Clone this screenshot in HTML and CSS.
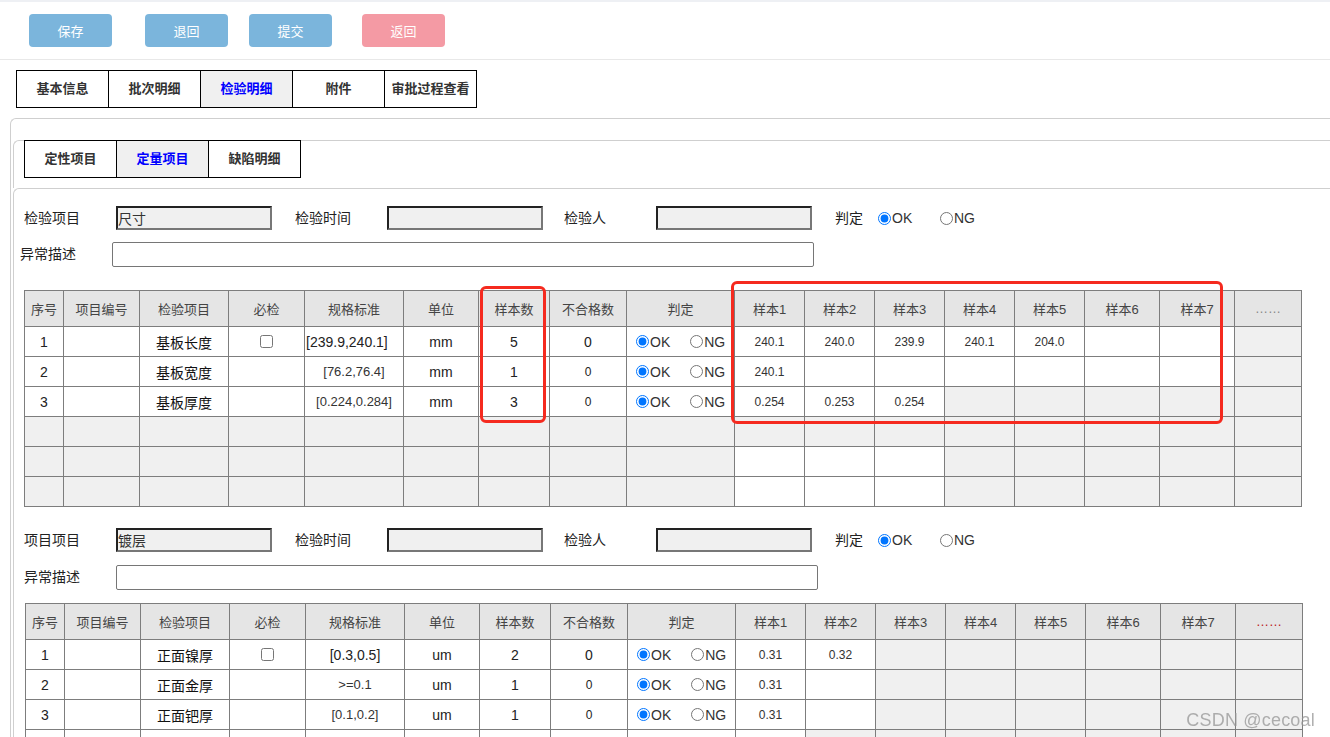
FILE: index.html
```html
<!DOCTYPE html>
<html lang="zh-CN">
<head>
<meta charset="utf-8">
<title>检验明细</title>
<link rel="stylesheet" href="styles.css">
</head>
<body>
<div class="topbar">
  <button class="btn btn-blue">保存</button>
  <button class="btn btn-blue gap-a">退回</button>
  <button class="btn btn-blue gap-b">提交</button>
  <button class="btn btn-pink gap-c">返回</button>
</div>

<div class="tabs main-tabs">
  <div class="tab">基本信息</div>
  <div class="tab">批次明细</div>
  <div class="tab active">检验明细</div>
  <div class="tab">附件</div>
  <div class="tab">审批过程查看</div>
</div>

<div class="outer">
  <div class="panel panel-tabs">
    <div class="tabs sub-tabs">
      <div class="tab">定性项目</div>
      <div class="tab active">定量项目</div>
      <div class="tab">缺陷明细</div>
    </div>
  </div>

  <div class="panel panel-body">
    <div class="form form-first">
      <div class="frow">
        <span class="flabel">检验项目</span>
        <input class="finput" type="text" value="尺寸" readonly>
        <span class="flabel gap-23">检验时间</span>
        <input class="finput" type="text" value="" readonly>
        <span class="flabel gap-21">检验人</span>
        <input class="finput" type="text" value="" readonly>
        <span class="flabel flabel-short gap-23">判定</span>
        <label class="fradio"><input type="radio" name="f1" checked>OK</label>
        <label class="fradio"><input type="radio" name="f1">NG</label>
      </div>
      <div class="frow frow-desc">
        <span class="flabel shift">异常描述</span>
        <input class="fdesc" type="text" value="">
      </div>
    </div>

    <div class="tbl-wrap">
      <table class="t">
        <colgroup>
          <col class="c-no"><col class="c-code"><col class="c-item"><col class="c-must"><col class="c-spec"><col class="c-unit"><col class="c-cnt"><col class="c-bad"><col class="c-judge">
          <col class="c-s"><col class="c-s"><col class="c-s"><col class="c-s"><col class="c-s"><col class="c-s2"><col class="c-s2"><col class="c-more">
        </colgroup>
        <tr class="hd">
          <th>序号</th><th>项目编号</th><th>检验项目</th><th>必检</th><th>规格标准</th><th>单位</th><th>样本数</th><th>不合格数</th><th>判定</th>
          <th>样本1</th><th>样本2</th><th>样本3</th><th>样本4</th><th>样本5</th><th>样本6</th><th>样本7</th><th class="more">……</th>
        </tr>
        <tr>
          <td>1</td><td></td><td class="name">基板长度</td><td><input class="chk" type="checkbox"></td><td class="spec big left">[239.9,240.1]</td><td>mm</td><td>5</td><td>0</td>
          <td><div class="jr"><label><input type="radio" name="a1" checked>OK</label><label><input type="radio" name="a1">NG</label></div></td>
          <td class="s">240.1</td><td class="s">240.0</td><td class="s">239.9</td><td class="s">240.1</td><td class="s">204.0</td><td class="s"></td><td class="s"></td><td class="g"></td>
        </tr>
        <tr>
          <td>2</td><td></td><td class="name">基板宽度</td><td></td><td class="spec">[76.2,76.4]</td><td>mm</td><td>1</td><td class="sm">0</td>
          <td><div class="jr"><label><input type="radio" name="a2" checked>OK</label><label><input type="radio" name="a2">NG</label></div></td>
          <td class="s">240.1</td><td class="s"></td><td class="s"></td><td class="s"></td><td class="s"></td><td class="s"></td><td class="s"></td><td class="g"></td>
        </tr>
        <tr>
          <td>3</td><td></td><td class="name">基板厚度</td><td></td><td class="spec">[0.224,0.284]</td><td>mm</td><td>3</td><td class="sm">0</td>
          <td><div class="jr"><label><input type="radio" name="a3" checked>OK</label><label><input type="radio" name="a3">NG</label></div></td>
          <td class="s">0.254</td><td class="s">0.253</td><td class="s">0.254</td><td class="g"></td><td class="g"></td><td class="g"></td><td class="g"></td><td class="g"></td>
        </tr>
        <tr class="empty">
          <td></td><td></td><td></td><td></td><td></td><td></td><td></td><td></td><td></td><td></td><td></td><td></td><td></td><td></td><td></td><td></td><td></td>
        </tr>
        <tr class="empty">
          <td></td><td></td><td></td><td></td><td></td><td></td><td></td><td></td><td></td><td class="w"></td><td class="w"></td><td class="w"></td><td></td><td></td><td></td><td></td><td></td>
        </tr>
        <tr class="empty">
          <td></td><td></td><td></td><td></td><td></td><td></td><td></td><td></td><td></td><td class="w"></td><td class="w"></td><td class="w"></td><td></td><td></td><td></td><td></td><td></td>
        </tr>
      </table>
      <div class="mark mark-count"></div>
      <div class="mark mark-samples"></div>
    </div>

    <div class="form form-second">
      <div class="frow">
        <span class="flabel">项目项目</span>
        <input class="finput" type="text" value="镀层" readonly>
        <span class="flabel gap-23">检验时间</span>
        <input class="finput" type="text" value="" readonly>
        <span class="flabel gap-21">检验人</span>
        <input class="finput" type="text" value="" readonly>
        <span class="flabel flabel-short gap-23">判定</span>
        <label class="fradio"><input type="radio" name="f2" checked>OK</label>
        <label class="fradio"><input type="radio" name="f2">NG</label>
      </div>
      <div class="frow frow-desc">
        <span class="flabel">异常描述</span>
        <input class="fdesc" type="text" value="">
      </div>
    </div>

    <div class="tbl-wrap tbl-second">
      <table class="t">
        <colgroup>
          <col class="c-no"><col class="c-code"><col class="c-item"><col class="c-must"><col class="c-spec"><col class="c-unit"><col class="c-cnt"><col class="c-bad"><col class="c-judge">
          <col class="c-s"><col class="c-s"><col class="c-s"><col class="c-s"><col class="c-s"><col class="c-s2"><col class="c-s2"><col class="c-more">
        </colgroup>
        <tr class="hd">
          <th>序号</th><th>项目编号</th><th>检验项目</th><th>必检</th><th>规格标准</th><th>单位</th><th>样本数</th><th>不合格数</th><th>判定</th>
          <th>样本1</th><th>样本2</th><th>样本3</th><th>样本4</th><th>样本5</th><th>样本6</th><th>样本7</th><th class="more red">……</th>
        </tr>
        <tr>
          <td>1</td><td></td><td class="name">正面镍厚</td><td><input class="chk" type="checkbox"></td><td class="spec big">[0.3,0.5]</td><td>um</td><td>2</td><td>0</td>
          <td><div class="jr"><label><input type="radio" name="b1" checked>OK</label><label><input type="radio" name="b1">NG</label></div></td>
          <td class="s">0.31</td><td class="s">0.32</td><td class="g"></td><td class="g"></td><td class="g"></td><td class="g"></td><td class="g"></td><td class="g"></td>
        </tr>
        <tr>
          <td>2</td><td></td><td class="name">正面金厚</td><td></td><td class="spec">&gt;=0.1</td><td>um</td><td>1</td><td class="sm">0</td>
          <td><div class="jr"><label><input type="radio" name="b2" checked>OK</label><label><input type="radio" name="b2">NG</label></div></td>
          <td class="s">0.31</td><td class="s"></td><td class="g"></td><td class="g"></td><td class="g"></td><td class="g"></td><td class="g"></td><td class="g"></td>
        </tr>
        <tr>
          <td>3</td><td></td><td class="name">正面钯厚</td><td></td><td class="spec">[0.1,0.2]</td><td>um</td><td>1</td><td class="sm">0</td>
          <td><div class="jr"><label><input type="radio" name="b3" checked>OK</label><label><input type="radio" name="b3">NG</label></div></td>
          <td class="s">0.31</td><td class="s"></td><td class="g"></td><td class="g"></td><td class="g"></td><td class="g"></td><td class="g"></td><td class="g"></td>
        </tr>
        <tr>
          <td></td><td></td><td></td><td></td><td></td><td></td><td></td><td></td><td></td><td></td><td class="g"></td><td class="g"></td><td class="g"></td><td class="g"></td><td class="g"></td><td class="g"></td><td class="g"></td>
        </tr>
        <tr>
          <td></td><td></td><td></td><td></td><td></td><td></td><td></td><td></td><td></td><td></td><td class="g"></td><td class="g"></td><td class="g"></td><td class="g"></td><td class="g"></td><td class="g"></td><td class="g"></td>
        </tr>
      </table>
    </div>
  </div>
</div>

<div class="watermark">CSDN @cecoal</div>
</body>
</html>
```

FILE: styles.css
```css
html, body {
  margin: 0;
  padding: 0;
  overflow: hidden;
}
body {
  font-family: "Liberation Sans", "Noto Sans CJK SC", sans-serif;
  color: #333;
  background: #fff;
  height: 737px;
}

/* top toolbar */
.topbar {
  box-sizing: border-box;
  height: 60px;
  border-top: 2px solid #eef0f4;
  border-bottom: 1px solid #e8e8e8;
  padding: 12px 0 0 29px;
  display: flex;
  align-items: flex-start;
}
.btn {
  width: 83px;
  height: 33px;
  border: none;
  border-radius: 4px;
  color: #fff;
  font-family: "Liberation Sans", "Noto Sans CJK SC", sans-serif;
  font-size: 13px;
  padding: 0;
}
.btn-blue { background: #7bb5dc; }
.btn-pink { background: #f49aa4; }
.gap-a { margin-left: 33px; }
.gap-b { margin-left: 21px; }
.gap-c { margin-left: 30px; }

/* tabs */
.tabs {
  display: flex;
}
.tab {
  box-sizing: border-box;
  width: 93px;
  height: 38px;
  border: 1px solid #000;
  background: #fff;
  display: flex;
  align-items: center;
  justify-content: center;
  padding-bottom: 3px;
  font-size: 13px;
  font-weight: bold;
  color: #333;
}
.tab + .tab { margin-left: -1px; }
.tab.active {
  background: #f0f0f0;
  color: #0000ff;
}
.main-tabs {
  margin: 10px 0 0 16px;
}

/* panels */
.outer {
  margin: 10px 0 0 10px;
  border-top: 1px solid #cfcfcf;
  border-left: 1px solid #cfcfcf;
  border-top-left-radius: 6px;
  padding: 21px 0 0 2px;
}
.panel {
  border-top: 1px solid #cfcfcf;
  border-left: 1px solid #cfcfcf;
  border-top-left-radius: 6px;
}
.panel-tabs {
  padding: 0 0 10px 10px;
}
.sub-tabs {
  margin-top: -1px;
}
.panel-body {
  padding: 0 0 0 10px;
}

/* forms */
.frow {
  display: flex;
  align-items: center;
  height: 26px;
}
.form-first { padding-top: 16px; }
.form-second { padding-top: 20px; }
.frow-desc {
  margin-top: 11px;
  height: 25px;
}
.form-second .frow-desc { margin-top: 12px; }
.flabel {
  width: 92px;
  padding-bottom: 3px;
  font-size: 14px;
  color: #222;
  flex: none;
}
.flabel-short { width: 43px; }
.gap-23 { margin-left: 23px; }
.gap-21 { margin-left: 21px; }
.shift { margin-left: -4px; }
.finput {
  box-sizing: border-box;
  width: 156px;
  height: 24px;
  margin: 0;
  border-style: solid;
  border-width: 2px;
  border-color: #222 #777 #777 #222;
  background: #f0f0f0;
  font-family: "Liberation Sans", "Noto Sans CJK SC", sans-serif;
  font-size: 14px;
  color: #333;
  padding: 0;
  outline: none;
  flex: none;
}
.fdesc {
  box-sizing: border-box;
  width: 702px;
  height: 25px;
  margin: 0;
  border: 1px solid #767676;
  border-radius: 2px;
  background: #fff;
  padding: 0;
  flex: none;
}
.fradio {
  display: inline-flex;
  align-items: center;
  width: 62px;
  font-size: 14px;
  color: #333;
  flex: none;
}
.fradio input,
.jr input {
  width: 13px;
  height: 13px;
  margin: 0 1px 0 0;
}

/* tables */
.tbl-wrap {
  position: relative;
  margin: 23px 0 0 0;
  width: 1278px;
}
.tbl-second {
  margin-top: 13px;
  margin-left: 1px;
}
.t {
  border-collapse: collapse;
  table-layout: fixed;
  width: 1278px;
}
.t th, .t td {
  border: 1px solid #7d7d7d;
  padding: 0;
  text-align: center;
  vertical-align: middle;
  overflow: hidden;
  white-space: nowrap;
}
.t tr { height: 30px; }
.t tr.hd { height: 36px; }
.t th {
  background: #e5e5e5;
  font-weight: normal;
  font-size: 13px;
  color: #444;
}
.t th.more { color: #888; font-size: 13px; }
.t th.more.red { color: #b22; }
.t td {
  font-size: 14px;
  color: #222;
  background: #fff;
}
.t td.name { font-size: 14px; color: #111; }
.t td.spec { font-size: 13px; color: #333; }
.t td.spec.big { font-size: 14px; color: #222; }
.t td.spec.left { text-align: left; padding-left: 1px; }
.t td.sm { font-size: 12px; }
.t td.s { font-size: 12px; color: #333; }
.t td.g { background: #f0f0f0; }
.t tr.empty td { background: #f0f0f0; }
.t tr.empty td.w { background: #fff; }

.c-no { width: 39px; }
.c-code { width: 76px; }
.c-item { width: 89px; }
.c-must { width: 76px; }
.c-spec { width: 99px; }
.c-unit { width: 75px; }
.c-cnt { width: 71px; }
.c-bad { width: 77px; }
.c-judge { width: 108px; }
.c-s { width: 70px; }
.c-s2 { width: 75px; }
.c-more { width: 67px; }

.chk {
  width: 13px;
  height: 13px;
  margin: 3px 0 0 0;
}
.jr {
  display: flex;
  align-items: center;
  padding-left: 9px;
  font-size: 14px;
  color: #333;
}
.jr label {
  display: inline-flex;
  align-items: center;
}
.jr label + label { margin-left: 20px; }

/* annotation overlays */
.mark {
  position: absolute;
  box-sizing: border-box;
  border: 3px solid #f52a1f;
  border-radius: 6px;
  pointer-events: none;
}
.mark-count {
  left: 456px;
  top: -4px;
  width: 66px;
  height: 137px;
}
.mark-samples {
  left: 707px;
  top: -9px;
  width: 492px;
  height: 143px;
}

.watermark {
  position: fixed;
  right: 15px;
  bottom: 6px;
  font-size: 18px;
  color: rgba(150, 150, 150, 0.75);
  letter-spacing: 0.2px;
}
```
